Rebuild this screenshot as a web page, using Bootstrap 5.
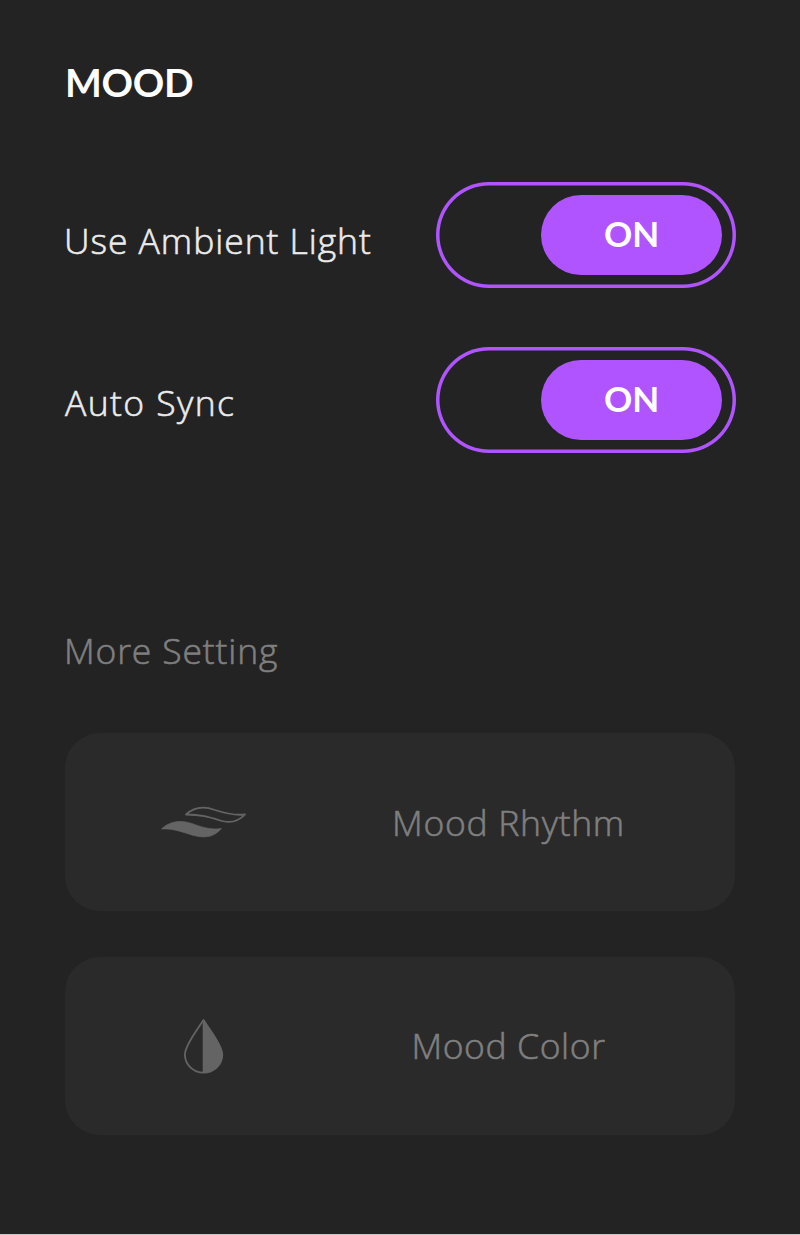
<!DOCTYPE html>
<html lang="en">
<head>
<meta charset="utf-8">
<meta name="viewport" content="width=device-width, initial-scale=1">
<title>Mood</title>
<link href="https://cdn.jsdelivr.net/npm/bootstrap@5.3.0/dist/css/bootstrap.min.css" rel="stylesheet">
<style>
body{background:#232323;color:#ebebeb;font-family:"Open Sans","Noto Sans",sans-serif;font-weight:300;font-size:35.5px;line-height:48px}
.panel{height:1235px;padding:58px 64px 0 65px;border-bottom:1px solid #c8c8c8;white-space:nowrap}
.panel-title{font:700 39px/48px Lato,sans-serif;color:#fff;letter-spacing:-.3px;margin:0 0 76px}
.setting{height:106px;margin-bottom:59px}
.setting-label{padding-top:10px;margin-left:-1px}
.setting-label.sync{padding-top:4px;margin-left:0}
.setting-label,.more-title,.option-text{-webkit-text-stroke:.6px currentColor}
.toggle{width:300px;height:106px;box-shadow:inset 0 0 0 3.5px #b054ff;border-radius:53px;padding-right:14px}
.knob{width:181px;height:80px;border-radius:40px;background:#b054ff;color:#fff;font:700 35px/48px Lato,sans-serif;padding-bottom:4px}
.more-title{color:#7f7f7f;margin:173px 0 59px -1px}
.option{width:670px;height:178px;background:#2a2a2a;border-radius:35px;color:#7f7f7f;margin-bottom:46px}
.option-icon{width:278px}
.option-text{width:331px;padding-bottom:2px}
.option-text.rhythm{padding-bottom:0}
.t1{letter-spacing:.95px}
.t2{letter-spacing:1.4px}
.t3{letter-spacing:.85px}
.t4{letter-spacing:.7px}
.t5{letter-spacing:.6px}
</style>
</head>
<body>
<main class="panel">
<h1 class="panel-title"><span>MOOD</span></h1>
<div class="setting d-flex justify-content-between align-items-center">
<div class="setting-label"><span class="t1">Use Ambient Light</span></div>
<div class="toggle d-flex align-items-center justify-content-end" role="switch" aria-checked="true"><div class="knob d-flex align-items-center justify-content-center"><span>ON</span></div></div>
</div>
<div class="setting d-flex justify-content-between align-items-center">
<div class="setting-label sync"><span class="t2">Auto Sync</span></div>
<div class="toggle d-flex align-items-center justify-content-end" role="switch" aria-checked="true"><div class="knob d-flex align-items-center justify-content-center"><span>ON</span></div></div>
</div>
<div class="more-title"><span class="t3">More Setting</span></div>
<div class="option d-flex align-items-center">
<div class="option-icon d-flex justify-content-center">
<svg width="110" height="55" viewBox="-1 0 110 55"><path d="M11.500 34C19 26.500 30 24.500 42 28.500C53 32.500 61 35 71.500 33.500C65 41 57 43.500 46 41C35 38.500 25 33 11.500 34Z" fill="#646464" stroke="#646464" stroke-width=".6" stroke-linejoin="round"/><path d="M36 19.500C44 12 54 11 65 15C77 19 86 20.500 95 19.500C88 27 80 28.500 70 25.500C59 22 51 19.500 36 19.500Z" fill="none" stroke="#646464" stroke-width="1.800" stroke-linejoin="round"/></svg>
</div>
<div class="option-text rhythm text-center"><span class="t4">Mood Rhythm</span></div>
</div>
<div class="option d-flex align-items-center">
<div class="option-icon d-flex justify-content-center">
<svg width="40" height="56" viewBox="0 0 40 56"><path d="M19.500 2C14.500 10 .900 27 .900 36.500A18.700 18.200 0 0 0 38.300 36.500C38.300 27 24.500 10 19.500 2Z" fill="none" stroke="#646464" stroke-width="1.800" stroke-linejoin="round"/><path d="M18.700 2H19.500C24.500 10 38.500 27 38.500 36.500A19 18.500 0 0 1 18.700 55Z" fill="#646464"/></svg>
</div>
<div class="option-text text-center"><span class="t5">Mood Color</span></div>
</div>
</main>
<script src="https://cdn.jsdelivr.net/npm/bootstrap@5.3.0/dist/js/bootstrap.bundle.min.js"></script>
</body>
</html>
